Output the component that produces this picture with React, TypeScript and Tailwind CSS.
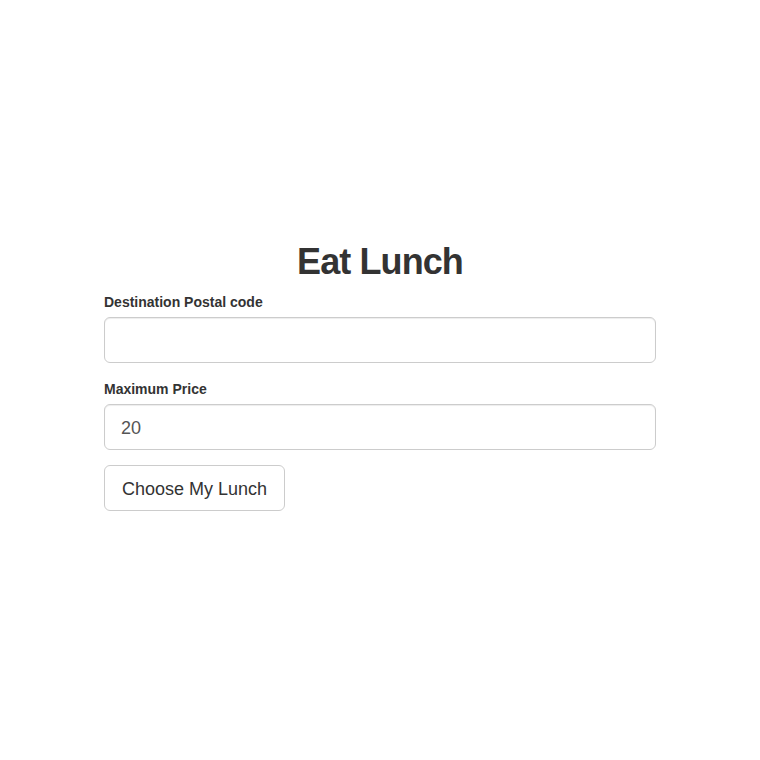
import { useState } from 'react';

export default function App() {
  const [postal, setPostal] = useState('');
  const [price, setPrice] = useState('20');

  return (
    <div className="min-h-[760px] bg-white text-[#333] font-['Liberation_Sans',Arial,sans-serif]">
      <div className="w-[552px] mx-auto pt-[242px]">
        <h1 className="text-[36px] leading-[1.1] font-bold tracking-[-0.9px] text-center mb-[10px]">Eat Lunch</h1>
        <form onSubmit={(e) => e.preventDefault()}>
          <div className="mb-[16px]">
            <label className="block text-[14px] leading-[20px] font-bold mb-[5px]">Destination Postal code</label>
            <input
              type="text"
              value={postal}
              onChange={(e) => setPostal(e.target.value)}
              className="block w-full h-[46px] px-4 pt-[12px] pb-[8px] text-[18px] text-[#555] border border-[#ccc] rounded-[6px] shadow-[inset_0_1px_1px_rgba(0,0,0,0.075)] focus:outline-none"
            />
          </div>
          <div className="mb-[15px]">
            <label className="block text-[14px] leading-[20px] font-bold mb-[5px]">Maximum Price</label>
            <input
              type="text"
              value={price}
              onChange={(e) => setPrice(e.target.value)}
              className="block w-full h-[46px] px-4 pt-[12px] pb-[8px] text-[18px] text-[#555] border border-[#ccc] rounded-[6px] shadow-[inset_0_1px_1px_rgba(0,0,0,0.075)] focus:outline-none"
            />
          </div>
          <button
            type="submit"
            className="h-[46px] w-[181px] pt-[4px] text-[18px] leading-[1.33] text-[#333] bg-white border border-[#ccc] rounded-[6px] hover:bg-[#e6e6e6]"
          >
            Choose My Lunch
          </button>
        </form>
      </div>
    </div>
  );
}
